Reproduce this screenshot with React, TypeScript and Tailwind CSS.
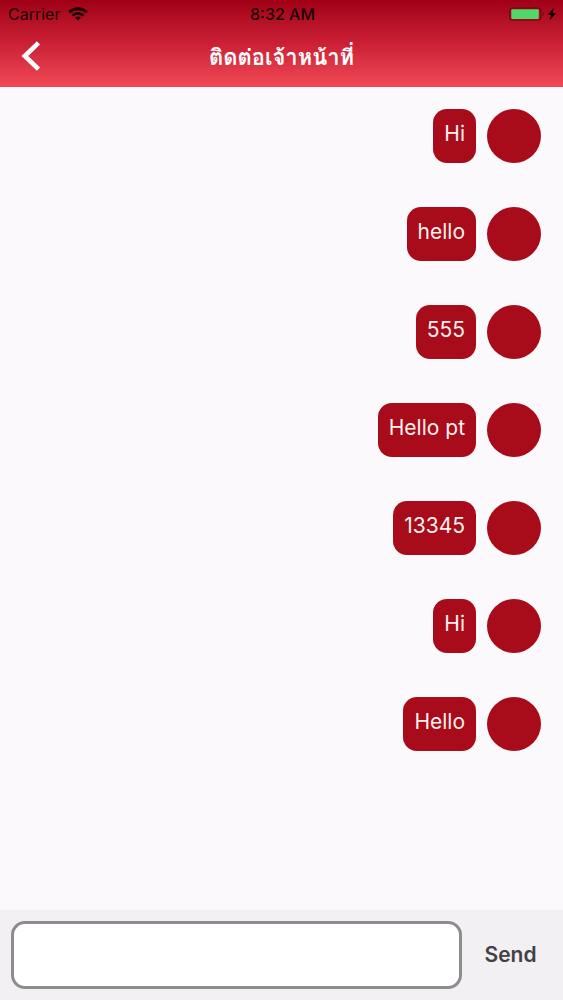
import { useState } from "react";
import type { FormEvent } from "react";

const initialMessages = ["Hi", "hello", "555", "Hello pt", "13345", "Hi", "Hello"];

function WifiIcon() {
  return (
    <svg viewBox="0 0 20 14" className="h-[14px] w-5" fill="none" aria-hidden="true">
      <path d="M1.200 5.100C6.100 .5 13.900 .5 18.800 5.100" stroke="#1c0003" strokeWidth="3" />
      <path d="M4.400 8.500C7.600 5.600 12.400 5.600 15.600 8.500" stroke="#1c0003" strokeWidth="2.600" />
      <path d="M10 13.600L7 10.700C8.600 9.200 11.400 9.200 13 10.700Z" fill="#1c0003" />
    </svg>
  );
}

function BatteryIcon() {
  return (
    <svg viewBox="0 0 48 16" className="h-4 w-12" aria-hidden="true">
      <rect x="0.8" y="2" width="31" height="12" rx="2.5" fill="none" stroke="#6e0710" strokeWidth="1.2" />
      <rect x="2.300" y="3.300" width="27.500" height="9.700" rx="1" fill="#52d769" />
      <path d="M33.700 6v4c1.500-.5 1.500-3.500 0-4Z" fill="#6e0710" />
      <path d="M44.800 1.800L38.500 9h3.500l-1.500 5.500L47.300 7h-3.600Z" fill="#1c0003" />
    </svg>
  );
}

function StatusBar() {
  return (
    <div className="grid h-7 grid-cols-3 items-center pl-2 pr-[6px] text-[#1c0003]">
      <div className="flex items-center gap-2 text-base">
        <span>Carrier</span>
        <WifiIcon />
      </div>
      <span className="text-center text-base font-medium">8:32 AM</span>
      <div className="flex justify-end">
        <BatteryIcon />
      </div>
    </div>
  );
}

function Header() {
  return (
    <header className="bg-linear-to-b from-[#a00016] via-[#cb1f36] to-[#f04856]">
      <StatusBar />
      <div className="grid h-[59px] grid-cols-[64px_1fr_64px] items-center">
        <button type="button" aria-label="Back" className="flex h-full items-center pl-5">
          <svg viewBox="0 0 24 32" className="mb-1 h-8 w-6" fill="none" aria-hidden="true">
            <path d="M18.500 2.800L4.800 16l13.700 13.200" stroke="white" strokeWidth="4.600" />
          </svg>
        </button>
        <h1 className="text-center font-[Garuda,Umpush,Loma,'Noto_Sans_Thai_Looped','Noto_Sans',sans-serif] text-[22px] leading-8 font-bold text-white">
          ติดต่อเจ้าหน้าที่
        </h1>
      </div>
    </header>
  );
}

function Message({ text }: { text: string }) {
  return (
    <li className="flex justify-end gap-[11px]">
      <p className="min-h-[54px] rounded-[14px] bg-[#a80b19] px-[11px] py-3 text-[21px] leading-[26px] text-[#fff0f0]">
        {text}
      </p>
      <span className="size-[54px] shrink-0 rounded-full bg-[#a80b19]" />
    </li>
  );
}

export default function App() {
  const [messages, setMessages] = useState(initialMessages);
  const [draft, setDraft] = useState("");

  const send = (event: FormEvent) => {
    event.preventDefault();
    if (!draft.trim()) return;
    setMessages([...messages, draft.trim()]);
    setDraft("");
  };

  return (
    <div className="flex h-screen flex-col bg-[#fbf9fc] font-[Inter,'Noto_Sans',sans-serif]">
      <Header />
      <main className="flex-1 overflow-y-auto px-[22px] py-[22px]">
        <ul className="flex flex-col gap-11">
          {messages.map((text, index) => (
            <Message key={index} text={text} />
          ))}
        </ul>
      </main>
      <form onSubmit={send} className="flex items-center bg-[#f2f0f3] py-[11px] pl-[11px]">
        <input
          type="text"
          aria-label="Message"
          value={draft}
          onChange={(event) => setDraft(event.target.value)}
          className="h-[68px] min-w-0 flex-1 rounded-[14px] border-3 border-[#8e8c90] bg-white px-3 text-[21px] outline-none"
        />
        <button type="submit" className="w-[101px] pr-1 text-center text-[21px] font-semibold text-[#424045]">
          Send
        </button>
      </form>
    </div>
  );
}
